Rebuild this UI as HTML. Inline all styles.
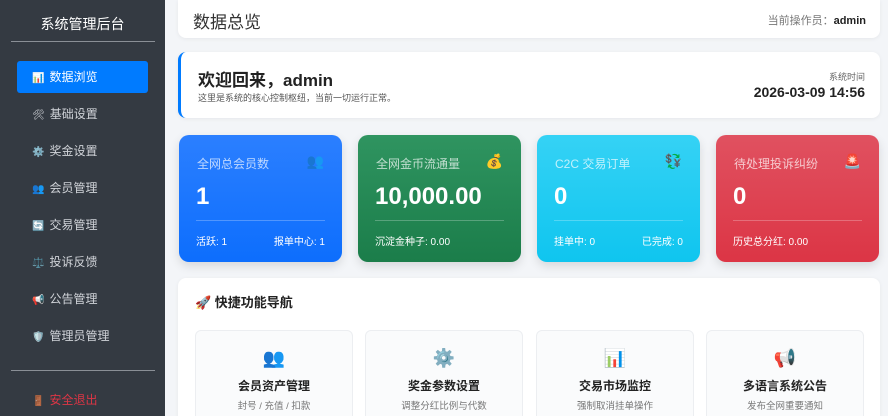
<!DOCTYPE html>
<html><head><meta charset="utf-8"><style>
*{box-sizing:border-box;margin:0;padding:0}
html,body{width:888px;height:416px;overflow:hidden}
body{background:#f3f5f8;font-family:"Liberation Sans","Noto Sans CJK SC",sans-serif;position:relative}
.side{position:absolute;left:0;top:0;width:165px;height:416px;background:#343a42}
.side h1{color:#fff;font-size:14px;font-weight:normal;text-align:center;margin-top:14px;height:28px}
.hr{position:absolute;left:11px;width:144px;height:1px;background:#8a8f96}
.nav{position:absolute;left:17px;width:131px;height:32px;color:#d0d3d8;font-size:12px;line-height:32px;padding-left:15px}
.nav i{font-style:normal;font-size:10px;margin-right:5px}
.act{background:#007bff;border-radius:3px;color:#fff}
.card{position:absolute;background:#fff;border-radius:8px;box-shadow:0 1px 4px rgba(0,0,0,.06)}
.stat{position:absolute;top:135px;width:163px;height:127px;border-radius:10px;color:#fff;box-shadow:0 4px 10px rgba(0,0,0,.12)}
.stat .t{position:absolute;left:18px;top:20px;font-size:12px;color:rgba(255,255,255,.7)}
.stat .ic{position:absolute;right:18px;top:18px;font-size:14px}
.stat .v{position:absolute;left:17px;top:48px;font-size:24px;font-weight:bold}
.stat .ln{position:absolute;left:17px;right:17px;top:85px;height:1px;background:rgba(255,255,255,.25)}
.stat .f{position:absolute;left:17px;right:17px;top:98px;font-size:10px;display:flex;justify-content:space-between}
.q{position:absolute;top:330px;width:158px;height:100px;background:#fafbfc;border:1px solid #eceef1;border-radius:6px;text-align:center}
.q .e{margin-top:17px;font-size:18px;height:24px}
.q .n{font-size:12px;font-weight:bold;color:#222;margin-top:5px}
.q .d{font-size:9.5px;color:#777;margin-top:4px}
</style></head><body>
<div class="side">
<h1>系统管理后台</h1>
<div class="hr" style="top:41px"></div>
<div class="nav act" style="top:61px"><i>📊</i>数据浏览</div>
<div class="nav" style="top:98px"><i>🛠</i>基础设置</div>
<div class="nav" style="top:135px"><i>⚙️</i>奖金设置</div>
<div class="nav" style="top:172px"><i>👥</i>会员管理</div>
<div class="nav" style="top:209px"><i>🔄</i>交易管理</div>
<div class="nav" style="top:246px"><i>⚖️</i>投诉反馈</div>
<div class="nav" style="top:283px"><i>📢</i>公告管理</div>
<div class="nav" style="top:320px"><i>🛡️</i>管理员管理</div>
<div class="hr" style="top:370px"></div>
<div class="nav" style="top:384px;color:#dc3545"><i>🚪</i>安全退出</div>
</div>
<div class="card" style="left:178px;top:0;width:702px;height:38px;border-radius:0 0 8px 8px">
<div style="position:absolute;left:15px;top:8px;font-size:17px;color:#333">数据总览</div>
<div style="position:absolute;right:14px;top:12px;font-size:11px;color:#777">当前操作员：<b style="color:#222">admin</b></div>
</div>
<div class="card" style="left:178px;top:52px;width:702px;height:66px;border-left:3px solid #007bff">
<div style="position:absolute;left:17px;top:14px;font-size:17px;font-weight:bold;color:#222">欢迎回来，admin</div>
<div style="position:absolute;left:17px;top:39px;font-size:9px;color:#555">这里是系统的核心控制枢纽，当前一切运行正常。</div>
<div style="position:absolute;right:15px;top:18px;font-size:9px;color:#666">系统时间</div>
<div style="position:absolute;right:15px;top:32px;font-size:14px;font-weight:bold;color:#222">2026-03-09 14:56</div>
</div>
<div class="stat" style="left:179px;background:linear-gradient(#2b7fff,#0d6efd)"><div class="t">全网总会员数</div><div class="ic">👥</div><div class="v">1</div><div class="ln"></div><div class="f"><span>活跃: 1</span><span>报单中心: 1</span></div></div>
<div class="stat" style="left:358px;background:linear-gradient(#2f9460,#1b7d4a)"><div class="t">全网金币流通量</div><div class="ic">💰</div><div class="v">10,000.00</div><div class="ln"></div><div class="f"><span>沉淀金种子: 0.00</span></div></div>
<div class="stat" style="left:537px;background:linear-gradient(#35d2f5,#0fc5ef)"><div class="t">C2C 交易订单</div><div class="ic">💱</div><div class="v">0</div><div class="ln"></div><div class="f"><span>挂单中: 0</span><span>已完成: 0</span></div></div>
<div class="stat" style="left:716px;background:linear-gradient(#e05160,#dc3545)"><div class="t">待处理投诉纠纷</div><div class="ic">🚨</div><div class="v">0</div><div class="ln"></div><div class="f"><span>历史总分红: 0.00</span></div></div>
<div class="card" style="left:178px;top:278px;width:702px;height:150px;border-radius:8px 8px 0 0">
<div style="position:absolute;left:17px;top:14px;font-size:13px;font-weight:bold;color:#222">🚀 快捷功能导航</div>
</div>
<div class="q" style="left:195px"><div class="e">👥</div><div class="n">会员资产管理</div><div class="d">封号 / 充值 / 扣款</div></div>
<div class="q" style="left:365px"><div class="e">⚙️</div><div class="n">奖金参数设置</div><div class="d">调整分红比例与代数</div></div>
<div class="q" style="left:536px"><div class="e">📊</div><div class="n">交易市场监控</div><div class="d">强制取消挂单操作</div></div>
<div class="q" style="left:706px"><div class="e">📢</div><div class="n">多语言系统公告</div><div class="d">发布全网重要通知</div></div>
</body></html>
